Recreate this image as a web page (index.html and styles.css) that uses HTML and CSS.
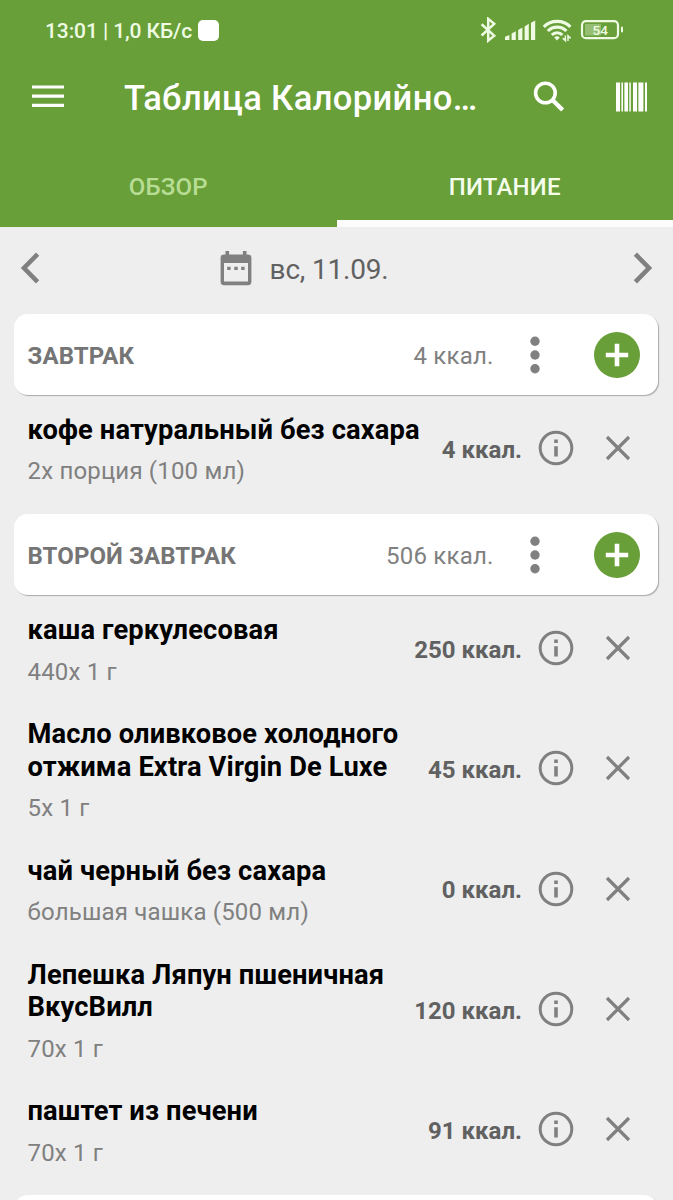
FILE: index.html
```html
<!DOCTYPE html>
<html lang="ru">
<head>
    <meta charset="UTF-8">
    <meta name="viewport" content="width=device-width, initial-scale=1.0">
    <title>Таблица Калорийности</title>
    <link rel="stylesheet" href="styles.css">
</head>
<body>
    <!-- Shared icons -->
    <svg class="sprite">
        <symbol id="dots" viewBox="0 0 10 38">
            <circle cx="5" cy="5.2" r="4.7"/>
            <circle cx="5" cy="19" r="4.7"/>
            <circle cx="5" cy="32.8" r="4.7"/>
        </symbol>
        <symbol id="info" viewBox="0 0 36 36">
            <circle cx="18" cy="18" r="15.8" fill="none" stroke="currentColor" stroke-width="3"/>
            <path d="M16.2 9.6h3.6v3.4h-3.6zM16.2 16.2h3.6v10.4h-3.6z"/>
        </symbol>
        <symbol id="close" viewBox="0 0 26 26">
            <path d="M2 2l22 22M24 2L2 24" fill="none" stroke="currentColor" stroke-width="3.2"/>
        </symbol>
        <symbol id="plus" viewBox="0 0 24 24">
            <path d="M12 .8v22.4M.8 12h22.4" fill="none" stroke="currentColor" stroke-width="4.6"/>
        </symbol>
    </svg>

    <header class="header">
        <div class="status-bar">
            <span class="status-text">13:01 | 1,0 КБ/с</span>
            <span class="status-square"></span>
            <svg class="status-icons" width="144" height="26" viewBox="480 17 144 26">
                <path d="M481.6 24.2l12.6 11.4-6 5V18.9l6 5-12.6 11.6" fill="none" stroke="currentColor" stroke-width="2.5"/>
                <path d="M505 40v-3.2l4.4-1.8v5zM511.6 40v-6.4l4.2-2.4V40zM518.2 40V30l4.2-2.6V40zM524.6 40V26.6l4.2-2.8V40zM531 40V22.8l4.2-2.4V40z" fill="currentColor"/>
                <g fill="none" stroke="currentColor" stroke-width="3.2">
                    <path d="M543.8 26.8a18.8 18.8 0 0 1 26.6 0"/>
                    <path d="M547.8 31a13 13 0 0 1 18.6 0"/>
                    <path d="M551.8 35a7.4 7.4 0 0 1 10.6 0"/>
                </g>
                <path d="M554.2 37.4a3.8 3.8 0 0 1 5.6 0L557 40.4z" fill="currentColor"/>
                <path d="M565.4 35.5v5.2l-2.6-2.6M568 41v-5.2l2.6 2.6" fill="none" stroke="currentColor" stroke-width="1.5"/>
                <rect x="582" y="21.2" width="36" height="17" rx="4" fill="none" stroke="currentColor" stroke-width="2.2"/>
                <rect x="585" y="24" width="16" height="11.4" rx="1" fill="currentColor" opacity=".35"/>
                <rect x="621" y="26.6" width="2" height="6" rx="1" fill="currentColor"/>
                <text x="600.2" y="35" text-anchor="middle" class="battery-text">54</text>
            </svg>
        </div>
        <div class="toolbar">
            <svg class="menu-icon" width="32" height="24" viewBox="0 0 32 24">
                <path d="M0 2h32M0 11.2h32M0 20.4h32" stroke="currentColor" stroke-width="3.2"/>
            </svg>
            <h1 class="title">Таблица Калорийно…</h1>
            <svg class="search-icon" width="32" height="32" viewBox="0 0 32 32">
                <circle cx="12.4" cy="12" r="9.8" fill="none" stroke="currentColor" stroke-width="3.6"/>
                <path d="M19 18.5L29.6 29" stroke="currentColor" stroke-width="4.4"/>
            </svg>
            <svg class="barcode-icon" width="32" height="30" viewBox="0 0 32 30">
                <path d="M0 .5h4v29H0zM5.4 .5h1.6v29H5.4zM8.4 .5h3.6v29H8.4zM13.3 .5h1.5v29h-1.5zM17 .5h4v29h-4zM22.4 .5h5v29h-5zM29 .5h2v29h-2z" fill="currentColor"/>
            </svg>
        </div>
        <nav class="tabs">
            <a class="tab">ОБЗОР</a>
            <a class="tab active">ПИТАНИЕ</a>
        </nav>
    </header>

    <div class="date-bar">
        <svg width="20" height="32" viewBox="0 0 20 32">
            <path d="M17.6 2.2L4 16l13.6 13.8" fill="none" stroke="currentColor" stroke-width="4.6"/>
        </svg>
        <div class="date">
            <svg width="32" height="36" viewBox="0 0 32 36">
                <path d="M5.5 1h3.6v3.4h13.8V1h3.6v3.4H28a3.4 3.4 0 0 1 3.4 3.4v24a3.4 3.4 0 0 1-3.4 3.4H4a3.4 3.4 0 0 1-3.4-3.4v-24A3.4 3.4 0 0 1 4 4.4h1.5zM4 13v18.6h24V13z" fill="currentColor" fill-rule="evenodd"/>
                <path d="M7.2 16.8h3.4v3.2H7.2zM14.3 16.8h3.4v3.2h-3.4zM21.2 16.8h3.4v3.2h-3.4z" fill="currentColor"/>
            </svg>
            <span>вс, 11.09.</span>
        </div>
        <svg width="20" height="32" viewBox="0 0 20 32">
            <path d="M2.4 2.2L16 16 2.4 29.8" fill="none" stroke="currentColor" stroke-width="4.6"/>
        </svg>
    </div>

    <main class="meals">
        <section class="meal">
            <div class="meal-card">
                <h2>ЗАВТРАК</h2>
                <span class="meal-total">4 ккал.</span>
                <svg class="dots"><use href="#dots"/></svg>
                <button class="add"><svg><use href="#plus"/></svg></button>
            </div>
            <div class="item">
                <div class="item-text">
                    <h3>кофе натуральный без сахара</h3>
                    <p>2x порция (100 мл)</p>
                </div>
                <span class="kcal">4 ккал.</span>
                <svg class="info"><use href="#info"/></svg>
                <svg class="close"><use href="#close"/></svg>
            </div>
        </section>

        <section class="meal">
            <div class="meal-card">
                <h2>ВТОРОЙ ЗАВТРАК</h2>
                <span class="meal-total">506 ккал.</span>
                <svg class="dots"><use href="#dots"/></svg>
                <button class="add"><svg><use href="#plus"/></svg></button>
            </div>
            <div class="item">
                <div class="item-text">
                    <h3>каша геркулесовая</h3>
                    <p>440x 1 г</p>
                </div>
                <span class="kcal">250 ккал.</span>
                <svg class="info"><use href="#info"/></svg>
                <svg class="close"><use href="#close"/></svg>
            </div>
            <div class="item">
                <div class="item-text">
                    <h3>Масло оливковое холодного<br>отжима Extra Virgin De Luxe</h3>
                    <p>5x 1 г</p>
                </div>
                <span class="kcal">45 ккал.</span>
                <svg class="info"><use href="#info"/></svg>
                <svg class="close"><use href="#close"/></svg>
            </div>
            <div class="item">
                <div class="item-text">
                    <h3>чай черный без сахара</h3>
                    <p>большая чашка (500 мл)</p>
                </div>
                <span class="kcal">0 ккал.</span>
                <svg class="info"><use href="#info"/></svg>
                <svg class="close"><use href="#close"/></svg>
            </div>
            <div class="item">
                <div class="item-text">
                    <h3>Лепешка Ляпун пшеничная<br>ВкусВилл</h3>
                    <p>70x 1 г</p>
                </div>
                <span class="kcal">120 ккал.</span>
                <svg class="info"><use href="#info"/></svg>
                <svg class="close"><use href="#close"/></svg>
            </div>
            <div class="item">
                <div class="item-text">
                    <h3>паштет из печени</h3>
                    <p>70x 1 г</p>
                </div>
                <span class="kcal">91 ккал.</span>
                <svg class="info"><use href="#info"/></svg>
                <svg class="close"><use href="#close"/></svg>
            </div>
        </section>

        <section class="meal">
            <div class="meal-card"></div>
        </section>
    </main>
</body>
</html>
```
FILE: styles.css
```css
* {
    margin: 0;
    padding: 0;
    box-sizing: border-box;
    font-family: Roboto, "Liberation Sans", sans-serif;
}

body {
    display: flex;
    flex-direction: column;
    height: 100vh;
    overflow: hidden;
    background: #eeeeee;
    color: #808080;
}

svg {
    display: block;
    flex: none;
    fill: currentColor;
}

.sprite {
    display: none;
}

/* Header */
.header {
    flex: none;
    height: 227px;
    background: #689f38;
    color: white;
}

.status-bar {
    display: flex;
    align-items: center;
    height: 60px;
    padding: 0 49px 0 45px;
    color: #eefbe2;
}

.status-text {
    padding-top: 1px;
    font-size: 21px;
    font-weight: 500;
    letter-spacing: -0.1px;
    white-space: nowrap;
}

.status-square {
    width: 21px;
    height: 21px;
    margin-left: 6px;
    border-radius: 5px;
    background: white;
}

.status-icons {
    margin-left: auto;
}

.battery-text {
    font-size: 13.5px;
    font-weight: 500;
}

.toolbar {
    display: flex;
    align-items: center;
    height: 74px;
    padding: 0 25px 0 32px;
}

.title {
    flex: 1;
    margin-left: 60px;
    padding-top: 2px;
    font-size: 34.5px;
    font-weight: 500;
    letter-spacing: 0.37px;
    white-space: nowrap;
}

.barcode-icon {
    margin-left: 51px;
}

.tabs {
    display: flex;
    height: 93px;
}

.tab {
    flex: 1;
    padding-top: 38px;
    border-bottom: 7px solid transparent;
    font-size: 24px;
    font-weight: 500;
    line-height: 30px;
    letter-spacing: 0.2px;
    text-align: center;
    color: #b7dc94;
}

.tab.active {
    border-color: #fcfcfc;
    color: #f4fdeb;
}

/* Date */
.date-bar {
    display: flex;
    flex: none;
    align-items: center;
    justify-content: space-between;
    height: 87px;
    padding: 0 20px 6px;
}

.date {
    display: flex;
    align-items: center;
    gap: 18px;
    margin-right: 65px;
    font-size: 28px;
    letter-spacing: -0.2px;
    color: #808080;
}

.date span {
    padding-top: 4px;
    color: #616161;
}

/* Meals */
.meals {
    flex: 1;
    min-height: 0;
    overflow: hidden;
}

.meal {
    margin-bottom: 14px;
}

.meal-card {
    display: flex;
    align-items: center;
    height: 81px;
    margin: 0 15px 1px 14px;
    padding: 0 18px 0 13.5px;
    border-radius: 14px;
    background: white;
    box-shadow: 1px 1px 1px #a8a8a8;
}

.meal-card h2 {
    flex: 1;
    padding-top: 2px;
    font-size: 24px;
    font-weight: 700;
    letter-spacing: 0.1px;
    color: #757575;
}

.meal-total {
    padding-top: 2px;
    font-size: 24px;
    letter-spacing: 0.2px;
    color: #808080;
}

.dots {
    width: 10px;
    height: 38px;
    margin: 0 54.5px 0 36px;
}

.add {
    display: flex;
    align-items: center;
    justify-content: center;
    width: 46px;
    height: 46px;
    border: none;
    border-radius: 50%;
    background: #689f38;
    color: white;
}

.add svg {
    width: 24px;
    height: 24px;
}

.item {
    display: flex;
    align-items: center;
    padding: 0 42px 0 27.5px;
}

.item-text {
    flex: 1;
    padding: 18px 0 13.7px;
}

.item h3 {
    font-size: 27.3px;
    font-weight: 700;
    line-height: 32.4px;
    letter-spacing: 0.13px;
    white-space: nowrap;
    color: black;
}

.item p {
    margin-top: 10px;
    font-size: 24px;
    line-height: 30px;
    letter-spacing: 0.18px;
    color: #808080;
}

.kcal {
    padding-top: 3px;
    font-size: 24px;
    font-weight: 700;
    color: #616161;
}

.info {
    width: 36px;
    height: 36px;
    margin: 0 31px 0 16px;
}

.close {
    width: 26px;
    height: 26px;
}
```
